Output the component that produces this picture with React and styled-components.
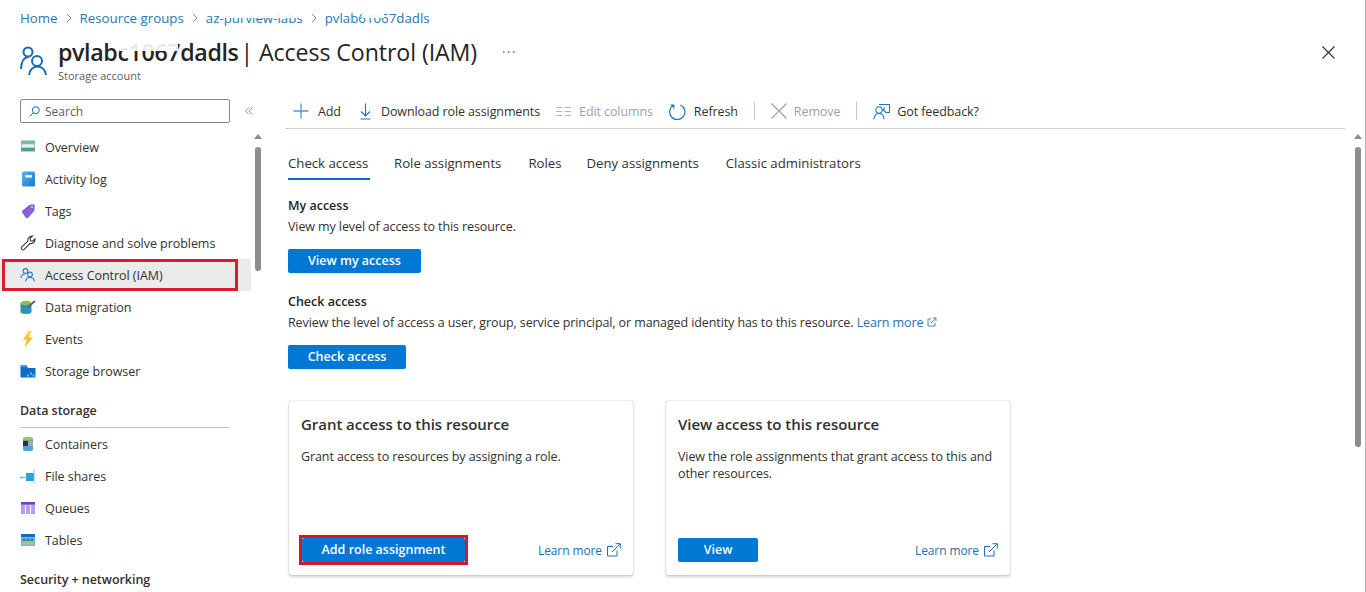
import React from "react";
import styled, { createGlobalStyle } from "styled-components";

const Global = createGlobalStyle`
  html, body { margin: 0; padding: 0; background: #fff; }
  body { font-family: "Open Sans", "Noto Sans", Arial, sans-serif; color: #323130; overflow: hidden; }
  *, *::before, *::after { box-sizing: border-box; }
`;

const Page = styled.div`
  width: 1366px; height: 592px; overflow: hidden; position: relative;
  border-right: 1px solid #b4b4b4; display: flex; flex-direction: column;
`;
const Breadcrumb = styled.nav`
  display: flex; align-items: center; height: 20px; margin-top: 8px; padding-left: 20px;
  font-size: 13.3px; color: #1f78b4;
`;
const Sep = styled.svg`width: 8px; height: 10px; margin: 0 7px; fill: none; stroke: #8a8886; stroke-width: 1;`;
const Crumb = styled.span`position: relative; white-space: nowrap;`;
const Smudge = styled.i`
  position: absolute; top: ${p => p.$top}px; left: ${p => p.$left}px; width: ${p => p.$w}px; height: ${p => p.$h}px;
  background: rgba(255,255,255,.9); filter: blur(.6px);
`;
const Header = styled.header`
  display: flex; height: 52px; margin-top: 10px; padding: 0 26px 0 20px; position: relative;
`;
const HeaderIcon = styled.svg`width: 28px; height: 30px; margin-top: 8px; fill: none; stroke: #0f6cbd; stroke-width: 2;`;
const HeaderText = styled.div`margin-left: 10px; display: flex; flex-direction: column;`;
const TitleRow = styled.div`display: flex; align-items: center; height: 28px;`;
const Title = styled.h1`
  margin: 0; font-size: 23.2px; font-weight: 400; letter-spacing: -0.1px; line-height: 28px; white-space: nowrap; color: #252423;
  b { font-weight: 600; position: relative; letter-spacing: -0.35px; margin-right: -4px; }
`;
const More = styled.span`margin-left: 25px; font-size: 13px; letter-spacing: 1.5px; color: #605e5c; line-height: 16px; margin-top: -1px;`;
const Subtitle = styled.div`font-size: 11px; color: #605e5c; line-height: 14px; margin-top: 3px;`;
const CloseIcon = styled.svg`position: absolute; right: 30px; top: 8px; width: 13px; height: 13px; stroke: #323130; stroke-width: 1.1; fill: none;`;

const Body = styled.div`display: flex; flex: 1; min-height: 0; margin-top: 8px;`;
const Side = styled.aside`width: 265px; flex: none; position: relative; overflow: hidden;`;
const SearchRow = styled.div`display: flex; align-items: flex-start; padding: 1px 0 0 20px; height: 33px;`;
const SearchBox = styled.div`
  width: 210px; height: 24px; border: 1px solid #8a8886; border-radius: 2px; display: flex; align-items: center; padding-left: 8px;
  font-size: 12px; color: #605e5c; gap: 5px;
`;
const Collapse = styled.svg`margin: 8px 0 0 15px; width: 8px; height: 8px; fill: none; stroke: #8a8886; stroke-width: .9;`;
const NavRow = styled.div`
  width: 251px; height: 32px; display: flex; align-items: center; padding-left: 20px; gap: 9px;
  font-size: 12.5px; color: #323130; position: relative; white-space: nowrap; letter-spacing: -0.05px;
  background: ${p => (p.$active ? "#ebebeb" : "transparent")};
  ${p => p.$active && `&::after { content: ""; position: absolute; left: 2px; top: 0; width: 236px; height: 32px; border: 3px solid #dc1c2e; }`}
`;
const NavIcon = styled.svg`width: 16px; height: 16px; flex: none; display: block;`;
const Group = styled.div`
  margin: 12px 0 0 20px; width: 210px; height: ${p => (p.$line ? 29 : 24)}px; font-size: 12.5px; font-weight: 600; line-height: 24px; color: #323130;
  border-bottom: ${p => (p.$line ? "1px solid #c8c6c4" : "none")}; letter-spacing: -0.05px;
`;
const Track = styled.div`position: absolute; right: 4px; top: 36px; width: 6px;`;
const Arrow = styled.div`
  width: 0; height: 0; margin: 0 0 8px -1px; border-left: 4px solid transparent; border-right: 4px solid transparent; border-bottom: 5px solid #8d8d8d;
`;
const Thumb = styled.div`width: 6px; height: ${p => p.$h}px; border-radius: 3px; background: #8d8d8d;`;

const Main = styled.main`flex: 1; min-width: 0; padding-left: 20px; position: relative;`;
const Toolbar = styled.div`
  width: 1060px; height: 31px; border-bottom: 1px solid #d2d0ce; display: flex; align-items: center; padding: 0 0 4px 8px;
  font-size: 12.5px; color: #323130; letter-spacing: -0.1px;
`;
const Tool = styled.span`
  display: flex; align-items: center; gap: ${p => p.$gap || 8}px; margin-right: ${p => p.$mr || 0}px; white-space: nowrap;
  color: ${p => (p.$off ? "#a19f9d" : "#323130")};
`;
const ToolIcon = styled.svg`
  width: ${p => p.$w || p.$s || 16}px; height: ${p => p.$s || 16}px; fill: none;
  stroke: ${p => p.$c || "#1f76bf"}; stroke-width: ${p => p.$sw || 1.1}; flex: none;
`;
const Divider = styled.span`width: 1px; height: 18px; background: #c8c6c4; margin: 0 16px;`;
const Tabs = styled.div`display: flex; height: 36px; margin-top: 17px; padding-left: 3px; font-size: 13.2px;`;
const Tab = styled.div`
  height: 34px; margin-right: ${p => p.$mr}px; line-height: 34px; white-space: nowrap; color: #323130;
  ${p => p.$active && `border-bottom: 2px solid #0f6cbd; width: 82px;`}
`;
const Section = styled.section`padding-left: 3px; margin-top: ${p => p.$top}px;`;
const H = styled.div`font-size: 12.5px; font-weight: 600; line-height: 18px; color: #252423;`;
const P = styled.p`margin: 4px 0 0; font-size: 12.5px; line-height: 16px; color: #323130; letter-spacing: -0.1px; white-space: nowrap;`;
const Link = styled.span`color: #1f6fb2;`;
const Primary = styled.button`
  display: block; height: 24px; width: ${p => p.$w}px; border: 0; border-radius: 2px; background: #0078d4; color: #fff; padding: 0 0 2px;
  font: 600 12.5px "Open Sans", sans-serif; margin-top: ${p => p.$top || 0}px; margin-left: ${p => p.$left || 0}px;
  position: relative;
  ${p => p.$mark && `&::after { content: ""; position: absolute; inset: -3px; border: 3px solid #d3182e; }`}
`;
const Cards = styled.div`display: flex; gap: 33px; margin: 32px 0 0 4px;`;
const Card = styled.article`
  width: 344px; height: 174px; border-radius: 2px; background: #fff; box-shadow: 0 0 1px rgba(0,0,0,.45), 0 1.5px 3px rgba(0,0,0,.18);
  padding: 13px 12px 13px 12px; display: flex; flex-direction: column;
`;
const CardTitle = styled.h2`margin: 0; font-size: 15px; font-weight: 600; line-height: 20px; color: #323130; letter-spacing: -0.05px;`;
const CardText = styled.p`margin: 14px 0 0; font-size: 12.5px; line-height: 17px; color: #323130; letter-spacing: -0.1px; flex: 1; max-width: 325px;`;
const CardFoot = styled.div`display: flex; align-items: center; justify-content: space-between;`;
const Ext = styled.span`display: flex; align-items: center; gap: 4px; font-size: 12px; color: #1f6fb2; letter-spacing: -0.1px;`;

const Ic = {
  overview: <><rect x="1" y="1.5" width="14" height="11" fill="#8f9a9a"/><rect x="1.5" y="2" width="13" height="3.2" fill="#66c7ae"/><rect x="1.5" y="5.2" width="13" height="3.6" fill="#e3f1ee"/><rect x="1.5" y="8.800" width="13" height="3.200" fill="#4f9d8e"/></>,
  log: <><defs><linearGradient id="lg" x1="0" y1="0" x2="1" y2="1"><stop offset="0" stopColor="#5db4ee"/><stop offset="1" stopColor="#1678cf"/></linearGradient></defs><rect x="2" y="0.5" width="13" height="15" rx="1.5" fill="url(#lg)"/><rect x="5.5" y="4" width="6.500" height="2.500" fill="#fff"/></>,
  tag: <><path d="M1.500 8.500 8.500 2.500 10.500 1.500H14.500V7.500L8 15h-2z" fill="#8a5fd0"/><circle cx="12" cy="4" r="1" fill="#d9c9f5"/></>,
  wrench: <g transform="translate(-.8 -.8) scale(1.13)"><path d="M2.500 13.500c-1-1-.8-1.600 0-2.400l5.200-5c-.4-2 1-4.500 4-4.400L9.600 3.800l.3 2 2 .4 2-2.100c.4 3-2 4.700-4.200 4.100l-5.200 5.200c-.7.7-1.400.7-2 .1z" fill="none" stroke="#323130" strokeWidth=".95"/></g>,
  iam: <g fill="none" stroke="#2a7cc7" strokeWidth="1.100"><circle cx="5.500" cy="4" r="2.400"/><path d="M1 11c.2-2.500 1.600-4 4-4"/><circle cx="10" cy="7.500" r="2.400"/><path d="M5.600 14.500c.2-2.500 1.900-4 4.400-4s4.200 1.500 4.400 4"/></g>,
  migrate: <><path d="M0.500 4h11v9c0 1-2.500 2-5.500 2s-5.500-1-5.500-2z" fill="#2b93b8"/><ellipse cx="6" cy="4" rx="5.500" ry="2.200" fill="#8bc34a"/><path d="M8 8 15 2" stroke="#7a3fb0" strokeWidth="1.700"/></>,
  bolt: <><defs><linearGradient id="bg" x1="0" y1="0" x2="0" y2="1"><stop offset="0" stopColor="#ffd93b"/><stop offset="1" stopColor="#f0a818"/></linearGradient></defs><path d="M8.500 0 3 8.500h4L4.500 16 13 6.500H8.800L11.500 0z" fill="url(#bg)"/></>,
  browser: <><path d="M0.500 3h6.500l1 2h7.500v9.500H0.500z" fill="#0f6cc7"/><path d="M7 11.500h2v2H7zM10 9.500h2v2h-2zM12.500 11.500h2v2h-2z" fill="#6cb5ee"/><rect x="0.500" y="2" width="6.500" height="2" fill="#35a0ee"/></>,
  containers: <><rect x="3" y="2" width="10" height="13" rx="2" fill="#4fa5d8"/><rect x="3" y="5" width="5" height="5" fill="#333"/><rect x="8" y="5" width="5" height="5" fill="#a9a9a9"/><ellipse cx="8" cy="2.500" rx="5" ry="1.800" fill="#a5c83c"/></>,
  files: <><path d="M6 5h8v8H6z" fill="#2b9fd8"/><path d="M0 9.500h7M14 1v14" stroke="#68c8ea" strokeWidth="1"/><circle cx="1.500" cy="9.500" r="1.300" fill="#68c8ea"/></>,
  queues: <><rect x="1" y="2" width="14" height="12" fill="#b99be8"/><rect x="1" y="2" width="14" height="2.500" fill="#6f3fbf"/><path d="M5.500 5v9M10.500 5v9" stroke="#fff"/></>,
  tables: <><rect x="1" y="2" width="14" height="12" fill="#78b7ea"/><rect x="1" y="2" width="14" height="3" fill="#0f6cbd"/><rect x="2.500" y="6.500" width="3" height="2.500" fill="#2a7fc7"/><rect x="6.500" y="6.500" width="3" height="2.500" fill="#2a7fc7"/><rect x="10.500" y="6.500" width="3" height="2.500" fill="#2a7fc7"/><rect x="2.500" y="10" width="3" height="2.500" fill="#c9c53a"/><rect x="6.500" y="10" width="3" height="2.500" fill="#c9c53a"/><rect x="10.500" y="10" width="3" height="2.500" fill="#c9c53a"/></>,
};

const Nav = ({ icon, label, active }) => (
  <NavRow $active={active}><NavIcon viewBox="0 0 16 16">{Ic[icon]}</NavIcon><span>{label}</span></NavRow>
);

const ExtIcon = () => (
  <svg width="15" height="14" viewBox="0 0 15 14" fill="none" stroke="#1f6fb2" strokeWidth="1"><path d="M7 3.500H1.500v9.500h9.500V7.500M6 9l8-8M9.500.7h4.800v4.800"/></svg>
);
const Chevron = () => <Sep viewBox="0 0 8 10"><path d="M2 1l4 4-4 4"/></Sep>;

export default function App() {
  return (
    <Page>
      <Global />
      <Breadcrumb>
        <Crumb>Home</Crumb><Chevron />
        <Crumb>Resource groups</Crumb><Chevron />
        <Crumb>az-purview-labs<Smudge $left={14} $top={2} $w={85} $h={7} /></Crumb><Chevron />
        <Crumb>pvlab61067dadls<Smudge $left={37} $top={2} $w={22} $h={7} /></Crumb>
      </Breadcrumb>
      <Header>
        <HeaderIcon viewBox="0 0 28 30">
          <circle cx="8" cy="6" r="4.500" /><path d="M1 23c.3-7 3-12 7.500-12" />
          <circle cx="17" cy="15" r="5" /><path d="M9 29c.5-5 4-8.500 8.500-8.500s8 3.500 8.500 8.500" />
        </HeaderIcon>
        <HeaderText>
          <TitleRow>
            <Title><b>pvlabc1067dadls<Smudge $left={62} $top={6} $w={58} $h={9} /></b> | Access Control (IAM)</Title>
            <More>···</More>
          </TitleRow>
          <Subtitle>Storage account</Subtitle>
        </HeaderText>
        <CloseIcon viewBox="0 0 13 13"><path d="M.5.5l12 12M12.500.5l-12 12" /></CloseIcon>
      </Header>
      <Body>
        <Side>
          <SearchRow>
            <SearchBox>
              <svg width="11" height="11" viewBox="0 0 11 11" fill="none" stroke="#0f6cbd" strokeWidth="1"><circle cx="6.800" cy="4.200" r="3.500"/><path d="M4.200 6.800.6 10.400"/></svg>
              Search
            </SearchBox>
            <Collapse viewBox="0 0 8 8"><path d="M4 .5.5 4 4 7.500M7.500.5 4 4l3.500 3.500"/></Collapse>
          </SearchRow>
          <Nav icon="overview" label="Overview" />
          <Nav icon="log" label="Activity log" />
          <Nav icon="tag" label="Tags" />
          <Nav icon="wrench" label="Diagnose and solve problems" />
          <Nav icon="iam" label="Access Control (IAM)" active />
          <Nav icon="migrate" label="Data migration" />
          <Nav icon="bolt" label="Events" />
          <Nav icon="browser" label="Storage browser" />
          <Group $line>Data storage</Group>
          <Nav icon="containers" label="Containers" />
          <Nav icon="files" label="File shares" />
          <Nav icon="queues" label="Queues" />
          <Nav icon="tables" label="Tables" />
          <Group>Security + networking</Group>
          <Track><Arrow /><Thumb $h={124} /></Track>
        </Side>
        <Main>
          <Toolbar>
            <Tool $gap={9} $mr={18}><ToolIcon $c="#4d9ad6" $sw={1.3} viewBox="0 0 16 16"><path d="M8 .5v15M.5 8h15"/></ToolIcon>Add</Tool>
            <Tool $gap={9} $mr={15}><ToolIcon $w={13} $s={17} viewBox="0 0 13 17"><path d="M6.500.5v12.500M2 8.500 6.500 13 11 8.500M1.500 16h10"/></ToolIcon>Download role assignments</Tool>
            <Tool $off $gap={7} $mr={16}><ToolIcon $s={17} $c="#b8b6b4" viewBox="0 0 17 16"><path d="M1 4h6.500M9.500 4H16M1 8h6.500M9.500 8H16M1 12h6.500M9.500 12H16"/></ToolIcon>Edit columns</Tool>
            <Tool $gap={8}><ToolIcon $s={17} $sw={1.2} viewBox="0 0 17 17"><path d="M11.300 2a7.600 7.600 0 1 1-6.600.3M4.800 5.600V2.200H1.400"/></ToolIcon>Refresh</Tool>
            <Divider />
            <Tool $off $gap={7}><ToolIcon $s={16} $c="#a19f9d" viewBox="0 0 16 16"><path d="M.5.5l15 15M15.500.5l-15 15"/></ToolIcon>Remove</Tool>
            <Divider />
            <Tool $gap={7}><ToolIcon $s={17} viewBox="0 0 17 17"><circle cx="6" cy="7" r="3.200"/><path d="M1 16c.4-3.500 2.300-5.500 5-5.500s4.600 2 5 5.500M6 1.500h10.500v8H13l-1.500-1.500M12 4.500 10 7l2 .7"/></ToolIcon>Got feedback?</Tool>
          </Toolbar>
          <Tabs>
            <Tab $active $mr={24}>Check access</Tab>
            <Tab $mr={27}>Role assignments</Tab>
            <Tab $mr={25}>Roles</Tab>
            <Tab $mr={27}>Deny assignments</Tab>
            <Tab $mr={0}>Classic administrators</Tab>
          </Tabs>
          <Section $top={15}>
            <H>My access</H>
            <P>View my level of access to this resource.</P>
            <Primary $w={133} $top={14}>View my access</Primary>
          </Section>
          <Section $top={20}>
            <H>Check access</H>
            <P>Review the level of access a user, group, service principal, or managed identity has to this resource. <Link>Learn more</Link> <svg width="10" height="10" viewBox="0 0 10 10" fill="none" stroke="#1f6fb2" strokeWidth=".8"><path d="M4 2H1v7h7V6M4 6l5-5M6 1h3v3"/></svg></P>
            <Primary $w={118} $top={14}>Check access</Primary>
          </Section>
          <Cards>
            <Card>
              <CardTitle>Grant access to this resource</CardTitle>
              <CardText>Grant access to resources by assigning a role.</CardText>
              <CardFoot>
                <Primary $w={163} $mark $left={1}>Add role assignment</Primary>
                <Ext>Learn more <ExtIcon /></Ext>
              </CardFoot>
            </Card>
            <Card>
              <CardTitle>View access to this resource</CardTitle>
              <CardText>View the role assignments that grant access to this and other resources.</CardText>
              <CardFoot>
                <Primary $w={80}>View</Primary>
                <Ext>Learn more <ExtIcon /></Ext>
              </CardFoot>
            </Card>
          </Cards>
          <Track><Arrow /><Thumb $h={300} /></Track>
        </Main>
      </Body>
    </Page>
  );
}
